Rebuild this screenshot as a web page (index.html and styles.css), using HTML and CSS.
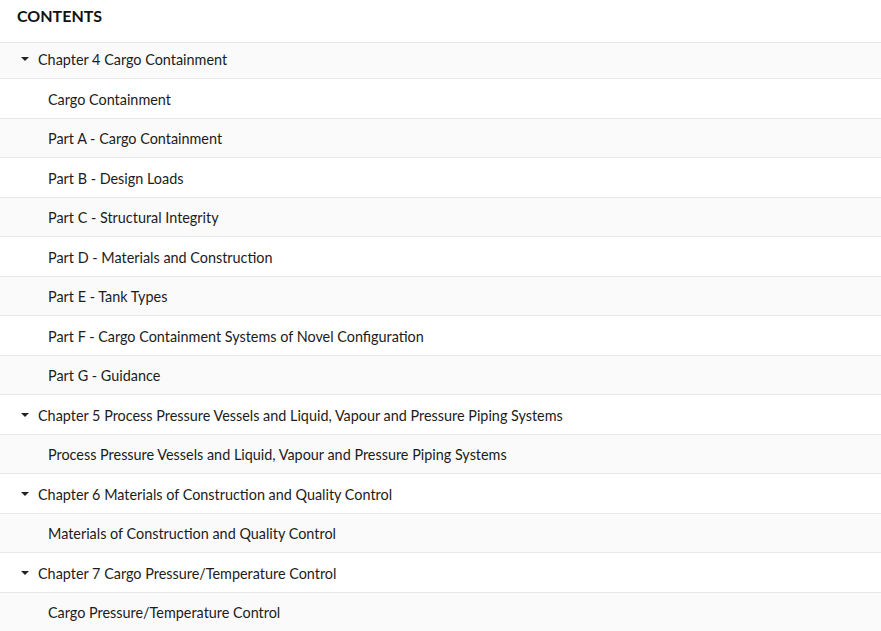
FILE: index.html
```html
<!DOCTYPE html>
<html lang="en">
<head>
    <meta charset="UTF-8">
    <title>Contents</title>
    <link rel="stylesheet" href="styles.css">
</head>
<body>
    <div class="toc">
        <div class="toc-head">CONTENTS</div>
        <div class="toc-body">
            <ul class="toc-list">
                <li class="toc-row toc-row_chapter"><i class="toc-caret"></i><span>Chapter 4 Cargo Containment</span></li>
                <li class="toc-row"><span>Cargo Containment</span></li>
                <li class="toc-row"><span>Part A - Cargo Containment</span></li>
                <li class="toc-row"><span>Part B - Design Loads</span></li>
                <li class="toc-row"><span>Part C - Structural Integrity</span></li>
                <li class="toc-row"><span>Part D - Materials and Construction</span></li>
                <li class="toc-row"><span>Part E - Tank Types</span></li>
                <li class="toc-row"><span>Part F - Cargo Containment Systems of Novel Configuration</span></li>
                <li class="toc-row"><span>Part G - Guidance</span></li>
                <li class="toc-row toc-row_chapter"><i class="toc-caret"></i><span>Chapter 5 Process Pressure Vessels and Liquid, Vapour and Pressure Piping Systems</span></li>
                <li class="toc-row"><span>Process Pressure Vessels and Liquid, Vapour and Pressure Piping Systems</span></li>
                <li class="toc-row toc-row_chapter"><i class="toc-caret"></i><span>Chapter 6 Materials of Construction and Quality Control</span></li>
                <li class="toc-row"><span>Materials of Construction and Quality Control</span></li>
                <li class="toc-row toc-row_chapter"><i class="toc-caret"></i><span>Chapter 7 Cargo Pressure/Temperature Control</span></li>
                <li class="toc-row"><span>Cargo Pressure/Temperature Control</span></li>
            </ul>
        </div>
    </div>
</body>
</html>
```

FILE: styles.css
```css
html,body{ margin: 0; padding: 0; background: #fff;}
body{ font: 14.4px/1.4 Lato,"Open Sans",sans-serif; color: #1c1c1c; -webkit-font-smoothing: antialiased;}

.toc{ height: 631px; display: flex; flex-direction: column; overflow: hidden;}
.toc-head{ flex: none; padding: 4px 17px 14px; font-size: 16px; line-height: 24px; font-weight: 700; color: #111; border-bottom: 1px solid #e6e6e6;}
.toc-body{ flex: 1; overflow: hidden;}

/* list is scrolled a little under the header */
.toc-list{ list-style: none; margin: -3.5px 0 0; padding: 0;}
.toc-row{ box-sizing: border-box; display: flex; align-items: center; height: 39.5px; padding: 3px 0 0 48px; border-top: 1px solid #e8e8e8; white-space: nowrap;}
.toc-row:first-child{ height: 38.5px; border-top: 0;}
.toc-row:nth-child(odd){ background: #fafafa;}
.toc-row_chapter{ padding-left: 21px;}

.toc-caret{ display: inline-block; width: 0; height: 0; margin: -2px 9px 0 0; border-left: 4px solid transparent; border-right: 4px solid transparent; border-top: 4px solid #222;}
```
